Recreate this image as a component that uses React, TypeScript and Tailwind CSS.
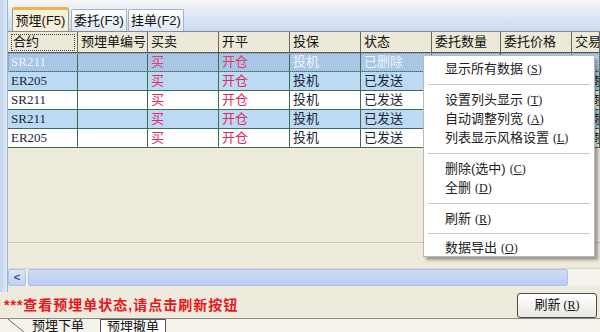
import React from "react";

const cols = [70, 70, 71, 71, 71, 71, 69, 71];
const headers = ["合约", "预埋单编号", "买卖", "开平", "投保", "状态", "委托数量", "委托价格", "交易"];

type Row = { c: string; s: string; sel?: boolean; bg: string };
const rows: Row[] = [
  { c: "SR211", s: "已删除", sel: true, bg: "bg-[#a8c6e6]" },
  { c: "ER205", s: "已发送", bg: "bg-[#bcdaf4]" },
  { c: "SR211", s: "已发送", bg: "bg-white" },
  { c: "SR211", s: "已发送", bg: "bg-[#bcdaf4]" },
  { c: "ER205", s: "已发送", bg: "bg-white" },
];

const sans = { fontFamily: '"Liberation Sans", "Noto Sans CJK SC", sans-serif' };
const serif = { fontFamily: '"Liberation Serif", "Noto Sans CJK SC", serif' };

function Item({ label, k }: { label: string; k: string }) {
  return (
    <div className="h-[19px] flex items-center pl-[21px] text-[13px] text-[#222] leading-none whitespace-nowrap">
      <span>{label}</span>
      <span className="ml-[4px] text-[12px]" style={serif}>
        (<span className="underline">{k}</span>)
      </span>
    </div>
  );
}

function Sep({ h = "h-[12px]" }: { h?: string }) {
  return (
    <div className={`${h} flex items-center px-[4px]`}>
      <div className="h-px w-full bg-[#c8c8c8]" />
    </div>
  );
}

export default function App() {
  return (
    <div className="w-[600px] h-[332px] relative overflow-hidden bg-[#eeebdc] flex flex-col" style={sans}>
      {/* top section */}
      <div className="h-[292px] flex">
        <div className="w-[8px] h-full bg-gradient-to-r from-[#c4d6ee] to-[#dfe9f6] border-r border-[#9fb4d2]" />
        <div className="flex-1 flex flex-col min-w-0">
          {/* tab strip */}
          <div className="h-[32px] flex items-end pl-[4px] bg-gradient-to-b from-[#f6f7f9] to-[#c9daf0] border-b border-[#8a8a8a]">
            <div className="w-[57px] h-[24px] mr-[2px] flex items-center justify-center text-[13px] text-[#111] bg-[#f6efd9] border border-[#9a9a9a] border-b-0 border-t-[3px] border-t-[#f0b54a] rounded-t-[2px]">
              预埋(F5)
            </div>
            <div className="w-[56px] h-[22px] mr-[1px] flex items-center justify-center text-[13px] text-[#111] bg-gradient-to-b from-white to-[#dde7f4] border border-[#a3b3cb] border-b-0 rounded-t-[2px]">
              委托(F3)
            </div>
            <div className="w-[56px] h-[22px] flex items-center justify-center text-[13px] text-[#111] bg-gradient-to-b from-white to-[#dde7f4] border border-[#a3b3cb] border-b-0 rounded-t-[2px]">
              挂单(F2)
            </div>
          </div>
          {/* header */}
          <div className="h-[21px] flex bg-[#ece9d8] border-b border-[#555]">
            {headers.map((h, i) => (
              <div
                key={h}
                className={`h-full flex items-center pl-[3px] text-[13px] text-[#111] whitespace-nowrap overflow-hidden border-r border-[#666] ${i === 8 ? "flex-1" : ""}`}
                style={i < 8 ? { width: cols[i] } : undefined}
              >
                {i === 0 ? (
                  <span className="border border-dotted border-[#444] px-[1px] w-[64px] h-[17px] flex items-center">{h}</span>
                ) : (
                  h
                )}
              </div>
            ))}
          </div>
          {/* rows */}
          {rows.map((r, ri) => {
            const dark = r.sel ? "text-[#eef4fb]" : "text-[#1c2438]";
            const red = r.sel ? "text-[#e23a6a]" : "text-[#de2a5c]";
            const cells = [r.c, "", "买", "开仓", "投机", r.s, "", "", "郑商"];
            return (
              <div key={ri} className={`h-[19px] flex ${r.bg} border-b border-[#3e6d52] ${r.sel ? "outline-1 outline-dotted outline-[#7790b0] -outline-offset-1" : ""}`}>
                {cells.map((v, i) => (
                  <div
                    key={i}
                    className={`h-full flex items-center pl-[3px] text-[13px] whitespace-nowrap overflow-hidden border-r border-[#3e6d52] ${i === 2 || i === 3 ? red : dark} ${i === 8 ? "flex-1" : ""}`}
                    style={{ ...(i < 8 ? { width: cols[i] } : {}), ...(i === 0 ? serif : sans) }}
                  >
                    {v}
                  </div>
                ))}
              </div>
            );
          })}
          {/* empty area */}
          <div className="flex-1 flex flex-col">
            <div className="h-[94px]" />
            <div className="h-px bg-[#cbc7b4]" />
            <div className="flex-1" />
          </div>
          {/* scrollbar */}
          <div className="h-[18px] flex items-stretch bg-[#f3f2ec] border-t border-[#d8d6cc]">
            <div className="w-[18px] flex items-center justify-center bg-gradient-to-b from-[#dce6f8] to-[#c0d0f0] border border-[#b0c2e6] rounded-[2px] text-[#3a4f86] text-[11px] font-bold">
              &lt;
            </div>
            <div className="w-[540px] ml-[2px] bg-gradient-to-b from-[#cfdcf8] to-[#bccdf3] border border-[#aebfe8] rounded-[2px]" />
            <div className="flex-1" />
          </div>
          <div className="h-[6px]" />
        </div>
      </div>
      {/* bottom area */}
      <div className="h-[26px] flex items-center">
        <div className="flex-1 pl-[4px] text-[14px] font-bold text-[#e8161e] whitespace-nowrap tracking-[1px]" style={sans}>
          ***查看预埋单状态,请点击刷新按钮
        </div>
        <div className="w-[80px] h-[25px] mr-[3px] flex items-center justify-center rounded-[3px] border border-[#4a4a4a] bg-gradient-to-b from-white to-[#e9e8e2] text-[13px] text-[#111]">
          刷新<span style={serif} className="text-[12px] ml-[3px]">(<span className="underline">R</span>)</span>
        </div>
      </div>
      <div className="h-px bg-[#8a8a8a]" />
      <div className="flex-1 relative bg-[#f4f2ea] flex items-end">
        <svg className="absolute left-[8px] top-0" width="18" height="14">
          <line x1="0" y1="0" x2="17" y2="14" stroke="#666" strokeWidth="1" />
        </svg>
        <div className="ml-[32px] w-[60px] h-[13px] flex items-center text-[13px] text-[#111] leading-none">预埋下单</div>
        <div className="ml-[8px] w-[66px] h-[13px] flex items-center justify-center bg-white border border-[#555] border-b-0 text-[13px] text-[#111] leading-none">
          预埋撤单
        </div>
      </div>

      {/* context menu */}
      <div className="absolute left-[423px] top-[55px] w-[172px] h-[202px] bg-white border border-[#b8b8b8] shadow-[3px_3px_3px_rgba(0,0,0,0.35)] pt-[3px]">
        <Item label="显示所有数据" k="S" />
        <Sep />
        <Item label="设置列头显示" k="T" />
        <Item label="自动调整列宽" k="A" />
        <Item label="列表显示风格设置" k="L" />
        <Sep />
        <Item label="删除(选中)" k="C" />
        <Item label="全删" k="D" />
        <Sep />
        <Item label="刷新" k="R" />
        <Sep h="h-[10px]" />
        <Item label="数据导出" k="O" />
      </div>
    </div>
  );
}
